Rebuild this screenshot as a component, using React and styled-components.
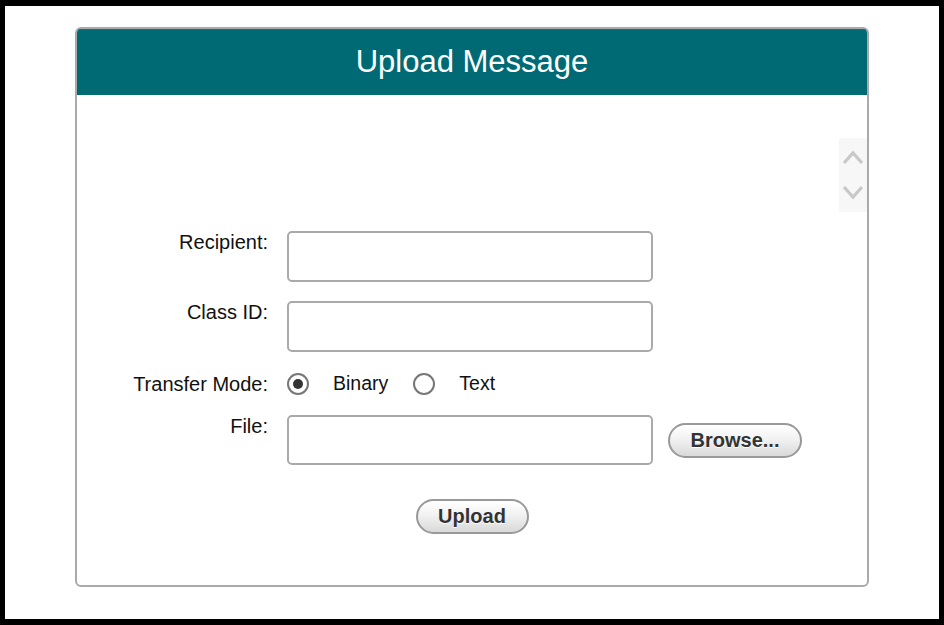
import React, { useState } from "react";
import styled, { createGlobalStyle } from "styled-components";

const GlobalStyle = createGlobalStyle`
  * { box-sizing: border-box; }
  html, body {
    margin: 0;
    padding: 0;
    background: #000;
    font-family: "Liberation Sans", Arial, sans-serif;
  }
`;

const Frame = styled.div`
  height: 100vh;
  padding: 6px 5px 6px 5px;
`;

const Page = styled.div`
  height: 100%;
  background: #fff;
  padding-top: 21px;
`;

const Card = styled.div`
  width: 794px;
  height: 560px;
  margin: 0 auto;
  border: 2px solid #aaa;
  border-radius: 6px;
  overflow: hidden;
  display: flex;
  flex-direction: column;
`;

const Header = styled.div`
  height: 66px;
  background: #006a74;
  color: #fff;
  font-size: 31px;
  line-height: 35px;
  text-align: center;
  padding-top: 14px;
  border-top: 1px solid #0c7680;
`;

const Body = styled.div`
  flex: 1;
  display: flex;
  flex-direction: column;
  padding-bottom: 50px;
`;

const ScrollBox = styled.div`
  align-self: flex-end;
  width: 28px;
  height: 74px;
  margin-top: 43px;
  background: #f7f7f7;
  display: flex;
  flex-direction: column;
  align-items: center;
  justify-content: center;
  gap: 18px;
`;

const Form = styled.div`
  margin-top: 19px;
  display: grid;
  grid-template-columns: 191px auto;
  column-gap: 19px;
  row-gap: 19px;
`;

const Label = styled.div`
  text-align: right;
  font-size: 20px;
  line-height: 22px;
  color: #111;
  align-self: ${(p) => (p.$center ? "center" : "start")};
`;

const Field = styled.div`
  display: flex;
  align-items: center;
  gap: ${(p) => (p.$gap !== undefined ? p.$gap : 15)}px;
  height: ${(p) => p.$h || 51}px;
`;

const TextBox = styled.input`
  width: 366px;
  height: ${(p) => p.$h || 51}px;
  border: 2px solid #aaa;
  border-radius: 5px;
  outline: none;
  font-size: 18px;
  padding: 0 8px;
  font-family: inherit;
`;

const RadioOption = styled.label`
  display: flex;
  align-items: center;
  gap: 24px;
  margin-right: 25px;
  font-size: 19.5px;
  color: #111;
  cursor: pointer;
`;

const Radio = styled.input`
  appearance: none;
  margin: 0;
  width: 22px;
  height: 22px;
  border: 2px solid #777;
  border-radius: 50%;
  display: grid;
  place-items: center;
  background: #fff;
  &:checked::after {
    content: "";
    width: 10px;
    height: 10px;
    border-radius: 50%;
    background: #333;
  }
`;

const PillButton = styled.button`
  width: ${(p) => p.$w}px;
  height: 35px;
  border: 2px solid #999;
  border-radius: 18px;
  background: linear-gradient(#ffffff, #f2f2f2 45%, #d9d9d9);
  font-family: "Liberation Sans", Arial, sans-serif;
  font-weight: bold;
  font-size: 20px;
  color: #333;
  text-shadow: 0 1px 0 #fff;
  padding: 0;
  cursor: pointer;
`;

const UploadButton = styled(PillButton)`
  display: block;
  margin: 34px auto 0;
`;

const Chevron = ({ up }) => (
  <svg width="22" height="17" viewBox="0 0 22 17">
    <polyline
      points={up ? "2,14 11,4 20,14" : "2,3 11,13 20,3"}
      fill="none"
      stroke="#c8c8c8"
      strokeWidth="3.2"
    />
  </svg>
);

export default function App() {
  const [mode, setMode] = useState("binary");

  return (
    <>
      <GlobalStyle />
      <Frame>
        <Page>
          <Card>
            <Header>Upload Message</Header>
            <Body>
              <ScrollBox>
                <Chevron up />
                <Chevron />
              </ScrollBox>
              <Form>
                <Label>Recipient:</Label>
                <Field>
                  <TextBox type="text" />
                </Field>

                <Label>Class ID:</Label>
                <Field>
                  <TextBox type="text" />
                </Field>

                <Label $center>Transfer Mode:</Label>
                <Field $h={25} $gap={0}>
                  <RadioOption>
                    <Radio
                      type="radio"
                      name="mode"
                      checked={mode === "binary"}
                      onChange={() => setMode("binary")}
                    />
                    Binary
                  </RadioOption>
                  <RadioOption>
                    <Radio
                      type="radio"
                      name="mode"
                      checked={mode === "text"}
                      onChange={() => setMode("text")}
                    />
                    Text
                  </RadioOption>
                </Field>

                <Label>File:</Label>
                <Field $h={50}>
                  <TextBox type="text" $h={50} />
                  <PillButton $w={134}>Browse...</PillButton>
                </Field>
              </Form>
              <UploadButton $w={113}>Upload</UploadButton>
            </Body>
          </Card>
        </Page>
      </Frame>
    </>
  );
}
